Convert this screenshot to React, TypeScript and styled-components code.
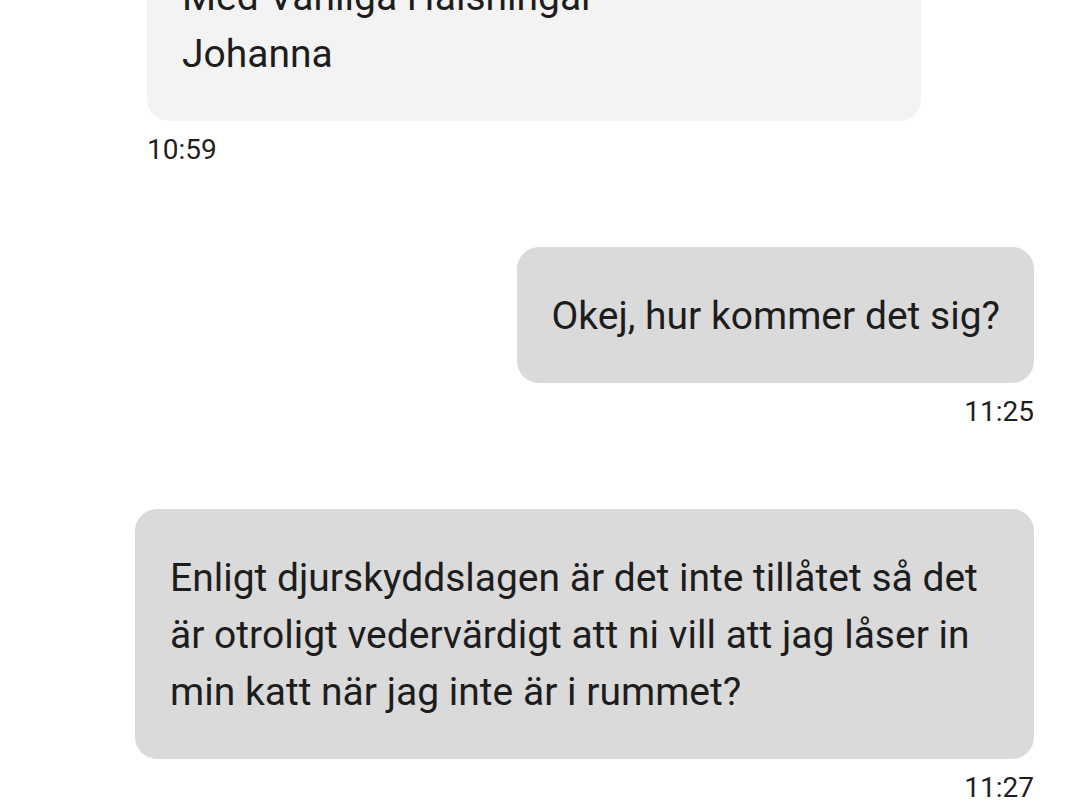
import React from 'react';
import styled, { createGlobalStyle, css } from 'styled-components';

type Side = 'in' | 'out';

type Message = {
  id: number
  side: Side
  text: string
  time: string
}

const messages: Message[] = [
  {
    id: 1,
    side: 'in',
    text: 'Hej!\nVi har fått klagomål från andra gäster om att din katt är ensam och jamar i rummet när du är borta. Vi ber dig därför att ta med katten eller hålla den i sin bur.\nMed Vänliga Hälsningar\nJohanna',
    time: '10:59',
  },
  {
    id: 2,
    side: 'out',
    text: 'Okej, hur kommer det sig?',
    time: '11:25',
  },
  {
    id: 3,
    side: 'out',
    text: 'Enligt djurskyddslagen är det inte tillåtet så det är otroligt vedervärdigt att ni vill att jag låser in min katt när jag inte är i rummet?',
    time: '11:27',
  },
];

const GlobalStyle = createGlobalStyle`
  html, body {
    margin: 0;
    padding: 0;
    background: #ffffff;
  }

  body {
    font-family: Roboto, "Noto Sans", "Liberation Sans", sans-serif;
    color: #1d1d1d;
    -webkit-font-smoothing: antialiased;
  }
`

const Screen = styled.div`
  height: 808px;
  overflow: hidden;
  display: flex;
  flex-direction: column;
  justify-content: flex-end;
`

const Thread = styled.div`
  display: flex;
  flex-direction: column;
  gap: 83px;
  padding: 0 46px 6px 135px;
`

const Group = styled.div<{ $side: Side }>`
  display: flex;
  flex-direction: column;
  ${(p) => p.$side === 'in'
    ? css`
      align-items: flex-start;
      padding-left: 12px;
    `
    : css`
      align-items: flex-end;
    `}
`

const Bubble = styled.div<{ $side: Side }>`
  box-sizing: border-box;
  max-width: ${(p) => p.$side === 'in' ? '774px' : '899px'};
  padding: 41px 34px 38px 35px;
  border-radius: 22px;
  background: ${(p) => p.$side === 'in' ? '#f3f3f3' : '#dadada'};
  font-size: 39px;
  line-height: 57px;
  white-space: pre-line;
`

const Time = styled.div`
  margin-top: 15px;
  font-size: 28px;
  line-height: 28px;
  color: #1f1f1f;
`

export default function App() {
  return (
    <>
      <GlobalStyle />
      <Screen>
        <Thread>
          {messages.map((msg) => (
            <Group key={msg.id} $side={msg.side}>
              <Bubble $side={msg.side}>{msg.text}</Bubble>
              <Time>{msg.time}</Time>
            </Group>
          ))}
        </Thread>
      </Screen>
    </>
  );
}
